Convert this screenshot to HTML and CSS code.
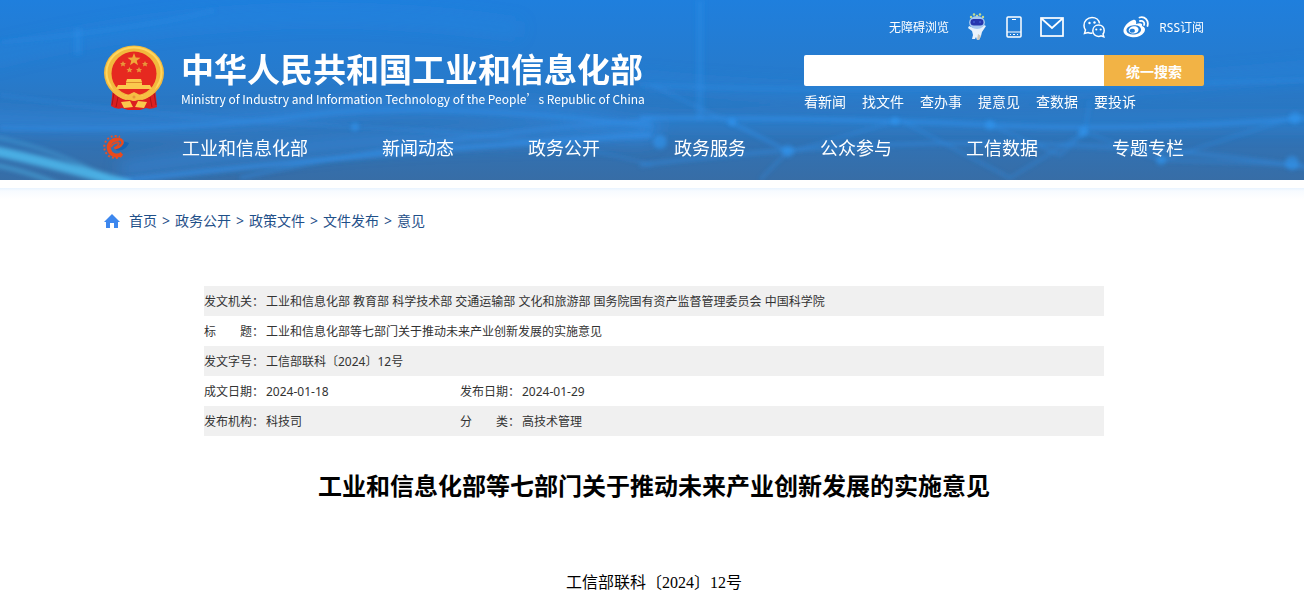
FILE: index.html
```html
<!DOCTYPE html>
<html lang="zh-CN">
<head>
  <meta charset="UTF-8">
  <meta name="viewport" content="width=device-width, initial-scale=1.0">
  <title>工业和信息化部等七部门关于推动未来产业创新发展的实施意见</title>
  <link rel="stylesheet" href="styles.css">
</head>
<body>
  <header class="header">
    <!-- light trails behind the header -->
    <svg class="header-bg" viewBox="0 0 1304 180" preserveAspectRatio="none" aria-hidden="true">
      <defs>
        <linearGradient id="sky" x1="0" y1="0" x2="0" y2="1">
          <stop offset="0" stop-color="#1f7fdd"/>
          <stop offset="0.45" stop-color="#277acb"/>
          <stop offset="1" stop-color="#376da6"/>
        </linearGradient>
        <filter id="soft" x="-20%" y="-50%" width="140%" height="200%"><feGaussianBlur stdDeviation="2"/></filter>
        <filter id="softer" x="-20%" y="-50%" width="140%" height="200%"><feGaussianBlur stdDeviation="8"/></filter>
      </defs>
      <rect width="1304" height="180" fill="url(#sky)"/>
      <g fill="none" stroke="#2f8be6" filter="url(#softer)">
        <path d="M-20 60 Q250 -10 520 30" stroke-width="16" opacity=".3"/>
        <path d="M-20 120 Q180 130 330 112 T660 130" stroke-width="18" opacity=".5"/>
        <path d="M120 170 Q380 130 652 135" stroke-width="16" opacity=".5"/>
        <path d="M640 80 Q900 110 1320 70" stroke-width="12" opacity=".35"/>
        <path d="M640 122 H1320" stroke-width="16" opacity=".35"/>
      </g>
      <g fill="none" stroke="#3292ec" filter="url(#soft)">
        <path d="M0 128 Q180 132 300 116 T652 126" stroke-width="4" opacity=".5"/>
        <path d="M110 182 Q300 160 460 148 T652 135" stroke-width="5" opacity=".6"/>
        <path d="M240 178 Q430 135 652 120" stroke-width="3" opacity=".5"/>
        <path d="M0 95 Q180 120 360 127 T652 165" stroke-width="2" opacity=".4"/>
        <path d="M640 118 Q850 118 990 125 T1310 118" stroke-width="4" opacity=".6"/>
        <path d="M640 85 Q850 95 1310 80" stroke-width="3" opacity=".4"/>
        <path d="M640 165 Q1000 120 1310 168" stroke-width="4" opacity=".4"/>
        <path d="M652 85 L790 152 L900 120 L1010 178 L1085 132 L1160 160 L1304 165" stroke-width="2" opacity=".5"/>
        <path d="M732 122 L788 151 L760 180 M990 125 L1060 155 L1085 132 L1090 100 M1161 160 L1292 118" stroke-width="2" opacity=".5"/>
        <path d="M0 42 Q150 28 215 10" stroke-width="3" opacity=".3"/>
        <path d="M700 0 V120 M78 28 V55" stroke-width="8" opacity=".3"/>
      </g>
      <g fill="#339af5" filter="url(#soft)" opacity=".55">
        <circle cx="660" cy="142" r="7"/><circle cx="788" cy="151" r="6"/>
        <circle cx="732" cy="122" r="4"/><circle cx="895" cy="121" r="4"/>
        <circle cx="990" cy="125" r="5"/><circle cx="1083" cy="132" r="5"/>
        <circle cx="1161" cy="160" r="5"/><circle cx="1292" cy="163" r="7"/>
        <circle cx="1295" cy="118" r="6"/><circle cx="355" cy="127" r="4"/>
      </g>
      <g fill="none" stroke="#4fbdf0" filter="url(#soft)">
        <path d="M-10 150 Q50 162 130 185" stroke-width="10" opacity=".8"/>
        <path d="M-10 164 Q40 174 70 190" stroke-width="4" opacity=".5"/>
        <path d="M-10 136 Q60 150 110 180" stroke-width="3" opacity=".4"/>
      </g>
    </svg>

    <div class="wrap">
      <div class="header-top">
        <a href="#" class="brand">
          <svg class="emblem" viewBox="0 0 60 65" aria-hidden="true">
            <path d="M9 42 L51 42 L53 62 Q47 65 42 63 L36 65 H24 L18 63 Q13 65 7 61 Z" fill="#dc1f20"/>
            <path d="M10 48 L8 60 M14 52 L12 62 M46 52 L48 62 M50 48 L52 60" stroke="#a91518" fill="none"/>
            <ellipse cx="30" cy="28" rx="30" ry="27.500" fill="#f2b93d"/>
            <ellipse cx="30" cy="27.500" rx="27.500" ry="25" fill="none" stroke="#ffd65e" stroke-width="2"/>
            <ellipse cx="30" cy="28.500" rx="22.500" ry="22" fill="#e62920"/>
            <path d="M30 8 L31.700 12.600 L36.500 12.700 L32.700 15.700 L34 20.300 L30 17.500 L26 20.300 L27.300 15.700 L23.500 12.700 L28.300 12.600 Z" fill="#f0a93a"/>
            <g fill="#e8963a">
              <path d="M19 16 l1 2 2 0 -1.500 1.500 .5 2 -2 -1 -2 1 .5 -2 -1.500 -1.500 2 0 Z"/>
              <path d="M41 16 l1 2 2 0 -1.500 1.500 .5 2 -2 -1 -2 1 .5 -2 -1.500 -1.500 2 0 Z"/>
              <path d="M25.500 22 l1 2 2 0 -1.500 1.500 .5 2 -2 -1 -2 1 .5 -2 -1.500 -1.500 2 0 Z"/>
              <path d="M35 22 l1 2 2 0 -1.500 1.500 .5 2 -2 -1 -2 1 .5 -2 -1.500 -1.500 2 0 Z"/>
            </g>
            <path d="M23 34 L37 34 L38 37 L38 40 L46 40 L48 44 L12 44 L14 40 L22 40 L22 37 Z" fill="#fbc94d"/>
            <path d="M22 37.500 H38" stroke="#dc8b2a" fill="none"/>
            <path d="M7 40 Q15 47 22 51 L30 47 L38 51 Q45 47 53 40 L49 49 Q43 54 38 55 L30 52 L22 55 Q17 54 11 49 Z" fill="#f6be44"/>
            <circle cx="30" cy="52" r="4" fill="#f6be44"/>
            <circle cx="30" cy="52" r="1.500" fill="#e8963a"/>
            <path d="M17 57 L26 56 L29 62 L20 63 Z M43 57 L34 56 L31 62 L40 63 Z" fill="#fbc94d"/>
          </svg>
          <span class="brand-text">
            <span class="brand-cn">中华人民共和国工业和信息化部</span>
            <span class="brand-en" lang="en">Ministry of Industry and Information Technology of the People’s Republic of China</span>
          </span>
        </a>

        <div class="tools">
          <div class="tool-links">
            <a href="#">无障碍浏览</a>
            <a href="#" aria-label="智能问答">
              <svg width="20" height="28" viewBox="0 0 20 28">
                <g fill="#c8dc8c"><circle cx="4" cy="4" r="1.200"/><circle cx="7" cy="1.500" r="1.200"/><circle cx="10" cy="3" r="1.200"/><circle cx="13" cy="1.500" r="1.200"/><circle cx="16" cy="4" r="1.200"/></g>
                <path d="M5 18 L1 15 L2 13 L7 15 H13 L17 12 L19 13 L15 19 L14 23 L12 27 H10 L9 24 L8 26 H5 L6 22 Z" fill="#e8f2fc"/>
                <ellipse cx="10" cy="9.500" rx="8" ry="6.500" fill="#a5c8f0"/>
                <rect x="3.500" y="6" width="13" height="6.500" rx="3.200" fill="#2737ae"/>
                <path d="M6 9 h2 M12 9 h2" stroke="#4a6fe0" fill="none"/>
                <path d="M11 21 L14 23 L12 27 H10 Z" fill="#c8c6bd"/>
              </svg>
            </a>
            <a href="#" aria-label="手机版">
              <svg width="16" height="22" viewBox="0 0 16 22" fill="none" stroke="#fff">
                <rect x="1" y="1" width="14" height="20" rx="1" stroke-width="1.500"/>
                <path d="M1 16 H15 M6 3.500 H10 M4 18.500 H5 M7 18.500 H9 M11 18.500 H12"/>
              </svg>
            </a>
            <a href="#" aria-label="邮箱">
              <svg width="24" height="20" viewBox="0 0 24 20" fill="none" stroke="#fff" stroke-width="1.700">
                <rect x="1" y="1" width="22" height="18"/>
                <path d="M1.500 1.500 L12 11 L22.500 1.500"/>
              </svg>
            </a>
            <a href="#" aria-label="微信">
              <svg width="22" height="22" viewBox="0 0 22 22" fill="none" stroke="#fff" stroke-width="1.500">
                <path d="M9.500 17 Q7 17.500 5 16.500 L1.500 17.500 L2.500 14 Q1 12 1 9.500 C1 5 4.500 1.500 9 1.500 C13 1.500 16 4 16.500 7.500"/>
                <path d="M15.500 9 C19 9 21.200 11.500 21.200 14.500 Q21.200 16.500 20 18 L20.800 20.800 L18 19.800 Q17 20.400 15.500 20.400 C12.200 20.400 9.800 18 9.800 14.800 C9.800 11.500 12.200 9 15.500 9 Z"/>
                <g fill="#fff" stroke="none"><circle cx="6.500" cy="7" r="1.200"/><circle cx="11.500" cy="6.500" r="1.200"/><circle cx="13.300" cy="13.500" r="1.100"/><circle cx="17.700" cy="13.500" r="1.100"/></g>
              </svg>
            </a>
            <span class="weibo-rss">
              <a href="#" aria-label="微博">
                <svg width="26" height="22" viewBox="0 0 26 22">
                  <path fill="#fff" fill-rule="evenodd" d="M10 4 C12 3 14 5 13 8 C17 6.500 20 7 19 10 C22 11 23 13.500 21 16.500 C18.500 20.500 13 22 8 21 C3 20 0 17.500 0.500 14 C1 10.500 5 5.500 10 4 Z M11 9.200 C6 9.500 3 12 3.500 14.800 C4 17.800 7.500 19 11.500 18.500 C16 18 18.500 15.500 18 13 C17.500 10.200 15 8.800 11 9.200 Z"/>
                  <path fill="#fff" fill-rule="evenodd" d="M10.500 10.300 C14 10 16 12 15.500 14.300 C15 16.800 12 18 9 17.500 C6 17 5 15 6 13 C7 11.500 8.500 10.500 10.500 10.300 Z M9.200 12.800 A2 2 0 1 0 9.300 16.600 A2 2 0 1 0 9.200 12.800 Z"/>
                  <path d="M16.500 1.500 C22 0 26 4.500 24.500 10 M17 5 C20 4.300 22 6.500 21 9" fill="none" stroke="#fff" stroke-width="1.800" stroke-linecap="round"/>
                </svg>
              </a>
              <a href="#">RSS订阅</a>
            </span>
          </div>
          <form class="search" action="#">
            <input type="text" name="q" aria-label="搜索">
            <button type="submit">统一搜索</button>
          </form>
          <div class="quick-links">
            <a href="#">看新闻</a>
            <a href="#">找文件</a>
            <a href="#">查办事</a>
            <a href="#">提意见</a>
            <a href="#">查数据</a>
            <a href="#">要投诉</a>
          </div>
        </div>
      </div>

      <nav class="nav">
        <a href="#" class="nav-logo" aria-label="首页">
          <svg width="28" height="26" viewBox="0 0 28 26" fill="none">
            <path d="M19.500 22 A11 11 0 1 1 18 3" stroke="#e0532c" stroke-width="2" stroke-dasharray="2 2"/>
            <path d="M20 19.500 A8 8 0 1 1 17 5.800" stroke="#ea4a1c" stroke-width="4"/>
            <path d="M9 13 Q12 8 17 9 Q16 13 12 14" stroke="#ea4a1c" stroke-width="1.500"/>
            <path d="M17 5 Q21 6 20.500 9.500 Q19 13 13 14.500" stroke="#ea4a1c" stroke-width="2.500"/>
            <path d="M13 15.500 Q21 14 22.500 7.500 L27 9 Q25 14 20 16 Q16 17 13 15.500 Z" fill="#1565b5"/>
          </svg>
        </a>
        <a href="#">工业和信息化部</a>
        <a href="#">新闻动态</a>
        <a href="#">政务公开</a>
        <a href="#">政务服务</a>
        <a href="#">公众参与</a>
        <a href="#">工信数据</a>
        <a href="#">专题专栏</a>
      </nav>
    </div>
  </header>
  <div class="header-line"></div>

  <main class="wrap">
    <div class="crumbs">
      <svg width="16" height="14" viewBox="0 0 16 14" aria-hidden="true">
        <path d="M8 0 L16 8 H14 V14 H10 V9 H6 V14 H2 V8 H0 Z" fill="#3d87ee"/>
      </svg>
      <a href="#">首页</a> <span>&gt;</span>
      <a href="#">政务公开</a> <span>&gt;</span>
      <a href="#">政策文件</a> <span>&gt;</span>
      <a href="#">文件发布</a> <span>&gt;</span>
      <a href="#">意见</a>
    </div>

    <article class="article">
      <table class="info">
        <colgroup>
          <col class="col-label">
          <col class="col-date">
          <col class="col-label">
          <col>
        </colgroup>
        <tr>
          <th scope="row">发文机关：</th>
          <td colspan="3">工业和信息化部 教育部 科学技术部 交通运输部 文化和旅游部 国务院国有资产监督管理委员会 中国科学院</td>
        </tr>
        <tr>
          <th scope="row">标&emsp;&emsp;题：</th>
          <td colspan="3">工业和信息化部等七部门关于推动未来产业创新发展的实施意见</td>
        </tr>
        <tr>
          <th scope="row">发文字号：</th>
          <td colspan="3">工信部联科〔2024〕12号</td>
        </tr>
        <tr>
          <th scope="row">成文日期：</th>
          <td>2024-01-18</td>
          <th scope="row">发布日期：</th>
          <td>2024-01-29</td>
        </tr>
        <tr>
          <th scope="row">发布机构：</th>
          <td>科技司</td>
          <th scope="row">分&emsp;&emsp;类：</th>
          <td>高技术管理</td>
        </tr>
      </table>
      <h1>工业和信息化部等七部门关于推动未来产业创新发展的实施意见</h1>
      <p class="doc-no">工信部联科〔2024〕12号</p>
    </article>
  </main>
</body>
</html>
```

FILE: styles.css
```css
* {
  box-sizing: border-box;
}

body {
  margin: 0;
  padding: 0;
  background: #fff;
  color: #333;
  font-family: "Noto Sans", "Noto Sans CJK SC", sans-serif;
  font-size: 12px;
}

a {
  color: inherit;
  text-decoration: none;
}

svg {
  display: block;
}

.wrap {
  max-width: 1104px;
  margin: 0 auto;
  padding-left: 4px;
}

/* header */
.header {
  position: relative;
  color: #fff;
  overflow: hidden;
}

.header .wrap {
  position: relative;
}

.header-bg {
  position: absolute;
  top: 0;
  left: 0;
  width: 100%;
  height: 100%;
}

.header-top {
  display: flex;
  justify-content: space-between;
  height: 116px;
}

.brand {
  display: flex;
  gap: 17px;
  padding-top: 45px;
}

.emblem {
  width: 60px;
  height: 65px;
}

.brand-text {
  display: flex;
  flex-direction: column;
  padding-top: 1px;
  white-space: nowrap;
}

.brand-cn {
  font-family: "Noto Sans CJK SC", sans-serif;
  font-size: 33px;
  font-weight: bold;
  line-height: 44px;
}

.brand-en {
  font-family: "Noto Sans CJK SC", sans-serif;
  font-size: 12px;
  line-height: 18px;
}

.tools {
  width: 400px;
  padding-top: 12px;
}

.tool-links {
  display: flex;
  justify-content: space-between;
  align-items: center;
  height: 30px;
  margin-left: 85px;
}

.weibo-rss {
  display: flex;
  align-items: center;
  gap: 10px;
}

.search {
  display: flex;
  height: 31px;
  margin-top: 13px;
  border-radius: 2px;
  overflow: hidden;
}

.search input {
  flex: 1;
  min-width: 0;
  border: 0;
  padding: 0 10px;
  background: #fff;
}

.search button {
  width: 100px;
  border: 0;
  padding: 0;
  background: #f2b345;
  color: #fff;
  font-family: inherit;
  font-size: 14px;
  font-weight: bold;
  cursor: pointer;
}

.quick-links {
  display: flex;
  gap: 16px;
  margin-top: 6px;
  font-size: 14px;
  line-height: 20px;
}

.nav {
  display: flex;
  align-items: center;
  gap: 74px;
  height: 64px;
  padding-bottom: 2px;
  font-size: 18px;
  white-space: nowrap;
}

.nav-logo {
  margin-left: -2px;
  margin-right: -22px;
}

.header-line {
  height: 11px;
  margin-top: 8px;
  background: linear-gradient(#e8f3ff, #f7fbff 3px, #fff);
}

/* breadcrumb */
.crumbs {
  display: flex;
  align-items: center;
  gap: 5px;
  padding-top: 11px;
  color: #1f5089;
  font-size: 14px;
  line-height: 22px;
}

.crumbs svg {
  margin-right: 4px;
}

/* document */
.article {
  margin: 0 100px;
  padding-top: 54px;
}

.info {
  width: 100%;
  border-collapse: collapse;
  table-layout: fixed;
}

.info tr:nth-child(odd) {
  background: #f0f0f0;
}

.info th,
.info td {
  height: 30px;
  padding: 0;
  font-weight: normal;
  text-align: left;
  white-space: nowrap;
}

.col-label {
  width: 62px;
}

.col-date {
  width: 194px;
}

.article h1 {
  margin: 32px 0 0;
  color: #000;
  font-size: 24px;
  line-height: 36px;
  text-align: center;
}

.doc-no {
  margin: 67px 0 0;
  color: #000;
  font-family: "Liberation Serif", "Noto Sans CJK SC", serif;
  font-size: 16px;
  line-height: 24px;
  text-align: center;
}
```
